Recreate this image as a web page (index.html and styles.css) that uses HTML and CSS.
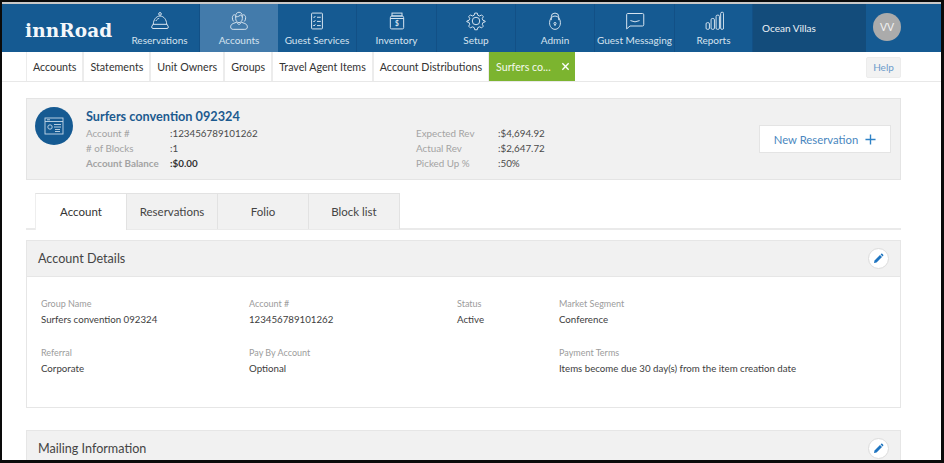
FILE: index.html
```html
<!DOCTYPE html>
<html lang="en">
<head>
<meta charset="utf-8">
<title>innRoad - Surfers convention 092324</title>
<link rel="stylesheet" href="styles.css">
</head>
<body>
<div class="screen">
  <header class="topnav">
    <div class="logo">innRoad</div>
    <nav class="mainnav">
      <a class="navitem w80">
        <svg class="navicon" viewBox="0 0 24 24"><circle cx="12" cy="3.500" r="1.600"/><path d="M4 16C4 10.500 7.500 6 12 6s8 4.500 8 10"/><path d="M7 12c1-1.800 2.300-2.800 4-3.200"/><path d="M3.500 16h17l1.500 3q0 2-1.500 2h-17Q2 21 2 19z"/></svg>
        <span>Reservations</span>
      </a>
      <a class="navitem w78 active">
        <svg class="navicon" viewBox="0 0 24 24"><path d="M8 6c0-3 2-4.500 4-4.500S16 3 16 6v3c0 3-2 5-4 5s-4-2-4-5z"/><path d="M8 7c3 0 5-1 6-2.500 .5 1 1 2 2 2.500"/><path d="M7 4.500C5 4.500 4 6 4 8c0 2 .5 3.500 1.500 4.500M17 4.500c2 0 3 1.500 3 3.500 0 2-.5 3.500-1.500 4.500"/><path d="M5 22c-2 0-3-1-3-3s1-3 3-4l4-1.500 3 3 3-3 4 1.500c2 1 3 2 3 4s-1 3-3 3z"/></svg>
        <span>Accounts</span>
      </a>
      <a class="navitem w79">
        <svg class="navicon" viewBox="0 0 24 24"><rect x="5.500" y="2.500" width="13" height="19" rx="1"/><path d="M7.500 7l1 1 1.500-2M7.500 12l1 1 1.500-2M7.500 17l1 1 1.500-2M12 7.500h4.500M12 12.500h4.500M12 17.500h4.500"/></svg>
        <span>Guest Services</span>
      </a>
      <a class="navitem w80">
        <svg class="navicon" viewBox="0 0 24 24"><rect x="6" y="2.500" width="12" height="3.500"/><path d="M5 6h14l1 2v12q0 1.500-1.500 1.500h-13Q4 21.500 4 20V8zM4 9h16"/><text class="dollar" x="12" y="18.500">$</text></svg>
        <span>Inventory</span>
      </a>
      <a class="navitem w79">
        <svg class="navicon" viewBox="0 0 24 24"><circle cx="12" cy="12" r="4.500"/><path d="M10.500 2.500h3l.7 2.600 2.200.9 2.300-1.300 2.100 2.100-1.300 2.300.9 2.200 2.600.7v1l-2.600.7-.9 2.200 1.300 2.300-2.100 2.100-2.300-1.300-2.200.9-.7 2.600h-3l-.7-2.600-2.200-.9-2.300 1.300-2.100-2.100 1.300-2.300-.9-2.200-2.600-.7v-1l2.600-.7.9-2.200-1.300-2.300 2.100-2.100 2.300 1.300 2.200-.9z"/></svg>
        <span>Setup</span>
      </a>
      <a class="navitem w79">
        <svg class="navicon" viewBox="0 0 24 24"><path d="M7.500 11V7a4.500 4.500 0 0 1 9 0v4"/><path d="M5.500 14a6.500 8 0 0 1 13 0c0 5-3 8-6.500 8s-6.500-3-6.500-8z"/><circle cx="12" cy="15" r="1.300"/><path d="M12 16v2"/></svg>
        <span>Admin</span>
      </a>
      <a class="navitem w80">
        <svg class="navicon" viewBox="0 0 24 24"><path d="M3 3h18q1.500 0 1.500 1.500v12q0 1.500-1.500 1.500H6l-4 3.500V4.500Q2 3 3 3z"/><path d="M6.500 11.500q5.500 3 11 0"/></svg>
        <span>Guest Messaging</span>
      </a>
      <a class="navitem w78">
        <svg class="navicon" viewBox="0 0 24 24"><rect x="2.500" y="14" width="4" height="8" rx="1.500"/><rect x="8.500" y="9" width="4" height="13" rx="1.500"/><rect x="14.500" y="5" width="4" height="17" rx="1.500"/><rect x="20" y="1.500" width="3.500" height="20.500" rx="1.500"/></svg>
        <span>Reports</span>
      </a>
    </nav>
    <div class="property">Ocean Villas</div>
    <div class="avatar">VV</div>
  </header>

  <div class="subnav">
    <a class="subitem">Accounts</a>
    <a class="subitem">Statements</a>
    <a class="subitem">Unit Owners</a>
    <a class="subitem">Groups</a>
    <a class="subitem">Travel Agent Items</a>
    <a class="subitem">Account Distributions</a>
    <a class="subitem current">Surfers co... <svg class="close" viewBox="0 0 10 10"><path d="M1.500 1.500l7 7M8.500 1.500l-7 7"/></svg></a>
    <a class="help">Help</a>
  </div>

  <main class="content">
    <section class="summary">
      <div class="badge">
        <svg viewBox="0 0 24 24"><rect x="3" y="4" width="18" height="16"/><path d="M3 7.500h18M5 5.800h3"/><circle cx="8" cy="13" r="2.200"/><path d="M12 10.500h7M12 13h7M13 15.500h5M13 17.500h5"/></svg>
      </div>
      <div class="summary-main">
        <h1 class="title">Surfers convention 092324</h1>
        <div class="stats">
          <dl class="statlist first">
            <dt>Account #</dt><dd>:123456789101262</dd>
            <dt># of Blocks</dt><dd>:1</dd>
            <dt class="strong">Account Balance</dt><dd class="strong dark">:$0.00</dd>
          </dl>
          <dl class="statlist second">
            <dt>Expected Rev</dt><dd>:$4,694.92</dd>
            <dt>Actual Rev</dt><dd>:$2,647.72</dd>
            <dt>Picked Up %</dt><dd>:50%</dd>
          </dl>
        </div>
      </div>
      <a class="newres">New Reservation <svg class="plus" viewBox="0 0 12 12"><path d="M6 .5v11M.5 6h11"/></svg></a>
    </section>

    <div class="tabs">
      <a class="tab selected">Account</a>
      <a class="tab">Reservations</a>
      <a class="tab">Folio</a>
      <a class="tab">Block list</a>
    </div>

    <section class="panel">
      <div class="panel-head">
        <h2>Account Details</h2>
        <button class="edit" type="button" aria-label="Edit"><svg viewBox="0 0 12 12"><path d="M1 11l.7-2.900 5.900-5.900 2.200 2.200-5.900 5.900z"/><path d="M8.300 1.500l.6-.6q.6-.5 1.200 0l1 1q.5.600 0 1.200l-.6.600z"/></svg></button>
      </div>
      <div class="fields">
        <div class="field"><label>Group Name</label><p>Surfers convention 092324</p></div>
        <div class="field"><label>Account #</label><p>123456789101262</p></div>
        <div class="field"><label>Status</label><p>Active</p></div>
        <div class="field"><label>Market Segment</label><p>Conference</p></div>
        <div class="field"><label>Referral</label><p>Corporate</p></div>
        <div class="field"><label>Pay By Account</label><p>Optional</p></div>
        <div class="field"></div>
        <div class="field"><label>Payment Terms</label><p>Items become due 30 day(s) from the item creation date</p></div>
      </div>
    </section>

    <section class="panel mailing">
      <div class="panel-head">
        <h2>Mailing Information</h2>
        <button class="edit" type="button" aria-label="Edit"><svg viewBox="0 0 12 12"><path d="M1 11l.7-2.900 5.900-5.900 2.200 2.200-5.900 5.900z"/><path d="M8.300 1.500l.6-.6q.6-.5 1.200 0l1 1q.5.600 0 1.200l-.6.600z"/></svg></button>
      </div>
    </section>
  </main>
</div>
</body>
</html>
```

FILE: styles.css
```css
* { box-sizing: border-box; }
html, body { margin: 0; padding: 0; height: 100%; overflow: hidden; background: #fff; }
body { font-family: Lato, "Open Sans", sans-serif; color: #3d3d3d; }
a { color: inherit; text-decoration: none; }

.screen {
  width: 944px;
  height: 463px;
  overflow: hidden;
  border-style: solid;
  border-color: #0a0a0a;
  border-width: 2px 3px 3px 2px;
  background: #fff;
}

.topnav {
  display: flex;
  height: 50px;
  border-top: 2px solid #c9c9c9;
  background: #155a92;
  color: #d5e3ef;
}
.logo {
  width: 118px;
  padding: 15px 0 0 23px;
  font: bold 18.500px/24px "DejaVu Serif", serif;
  letter-spacing: .1px;
  color: #f4f7fa;
}
.mainnav { display: flex; }
.navitem {
  display: flex;
  flex-direction: column;
  align-items: center;
  padding-top: 7px;
  border-right: 1px solid #125086;
  font-size: 10px;
  line-height: 14px;
  white-space: nowrap;
}
.w78 { width: 78px; }
.w79 { width: 79px; }
.w80 { width: 80px; }
.navitem.active { background: #437bab; border-right: 0; }
.navicon {
  width: 20px;
  height: 20px;
  margin-bottom: 2px;
  fill: none;
  stroke: #d5e3ef;
  stroke-width: 1.200;
}
.dollar { font: bold 8px Lato, sans-serif; fill: #d5e3ef; stroke: none; text-anchor: middle; }
.property {
  width: 113px;
  padding: 16px 0 0 9px;
  background: #134c7b;
  color: #eef3f7;
  font-size: 10px;
  line-height: 16px;
}
.avatar {
  width: 28px;
  height: 28px;
  margin: 9px 0 0 7px;
  border-radius: 50%;
  background: #ababab;
  color: #f2f2f2;
  font-size: 10.500px;
  line-height: 28px;
  text-align: center;
}

.subnav {
  display: flex;
  align-items: stretch;
  height: 30px;
  padding-left: 24px;
  border-bottom: 1px solid #e8e8e8;
  font-size: 10.700px;
  color: #333;
}
.subitem {
  display: flex;
  align-items: center;
  justify-content: center;
  border-left: 1px solid #ececec;
  border-right: 1px solid #ececec;
  padding: 0 6px;
  white-space: nowrap;
}
.subitem.current {
  justify-content: flex-start;
  gap: 10px;
  width: 86px;
  padding: 0 0 0 7px;
  border: 0;
  background: #7cb42f;
  color: #f4f9ec;
}
.close { width: 9px; height: 9px; fill: none; stroke: #fff; stroke-width: 1.500; }
.help {
  align-self: flex-start;
  width: 35px;
  height: 21px;
  margin: 5px 40px 0 auto;
  border: 1px solid #ececec;
  border-radius: 2px;
  background: #f2f2f2;
  color: #6c9bcb;
  font-size: 10px;
  line-height: 19px;
  text-align: center;
}

.content { padding: 16px 40px 0 24px; }

.summary {
  display: flex;
  height: 82px;
  padding: 8px 9px 0 8px;
  border: 1px solid #e4e4e4;
  background: #f1f1f1;
}
.badge {
  flex: none;
  width: 38px;
  height: 38px;
  border-radius: 50%;
  background: #155a92;
  display: flex;
  align-items: center;
  justify-content: center;
}
.badge svg { width: 24px; height: 24px; fill: none; stroke: #c7d9e8; stroke-width: .9; }
.summary-main { flex: 1; padding-left: 13px; }
.title { margin: 0 0 1px; font-size: 12.700px; line-height: 18px; font-weight: 700; color: #1c5a8f; }
.stats { display: flex; }
.statlist {
  display: grid;
  grid-template-columns: 84px auto;
  grid-auto-rows: 15px;
  margin: 0;
  font-size: 9.800px;
  line-height: 15px;
  color: #4a4a4a;
}
.statlist.first { width: 330px; }
.statlist.second { grid-template-columns: 82px auto; }
.statlist dt { color: #a3a3a3; }
.statlist dd { margin: 0; }
.strong { font-weight: 700; }
.statlist dd.dark { color: #333; }
.newres {
  flex: none;
  display: flex;
  align-items: center;
  justify-content: center;
  gap: 7px;
  align-self: flex-start;
  width: 132px;
  height: 28px;
  margin-top: 18px;
  border: 1px solid #e4e4e4;
  background: #fff;
  color: #4a87c0;
  font-size: 11.300px;
}
.plus { width: 11px; height: 11px; fill: none; stroke: #2e82c6; stroke-width: 1.500; }

.tabs {
  display: flex;
  height: 37px;
  margin-top: 13px;
  padding-left: 9px;
  border-bottom: 2px solid #eaeaea;
  font-size: 11.500px;
}
.tab {
  width: 91px;
  height: 36px;
  border: 1px solid #e2e2e2;
  border-bottom: 0;
  border-left: 0;
  background: #f1f1f1;
  color: #444;
  text-align: center;
  line-height: 35px;
}
.tab.selected { width: 92px; height: 37px; border-left: 1px solid #eeeeee; background: #fff; color: #333; }

.panel {
  height: 168px;
  margin-top: 10px;
  border: 1px solid #e6e6e6;
}
.panel.mailing { margin-top: 22px; height: 60px; }
.panel-head {
  display: flex;
  align-items: center;
  justify-content: space-between;
  height: 36px;
  padding: 0 11px;
  background: #f1f1f1;
  border-bottom: 1px solid #e6e6e6;
}
.panel-head h2 { margin: 0; font-size: 12.600px; font-weight: 400; color: #444; }
.edit {
  display: flex;
  align-items: center;
  justify-content: center;
  width: 21px;
  height: 21px;
  padding: 0;
  border: 1px solid #dcdcdc;
  border-radius: 50%;
  background: #fff;
}
.edit svg { width: 11px; height: 11px; fill: #1e74c0; }

.fields {
  display: grid;
  grid-template-columns: 208px 208px 102px 1fr;
  grid-auto-rows: 49px;
  padding: 21px 14px 0;
}
.field label { display: block; font-size: 9px; line-height: 12px; color: #9c9c9c; }
.field p { margin: 2px 0 0; font-size: 9.700px; line-height: 15px; color: #3d3d3d; }
```
